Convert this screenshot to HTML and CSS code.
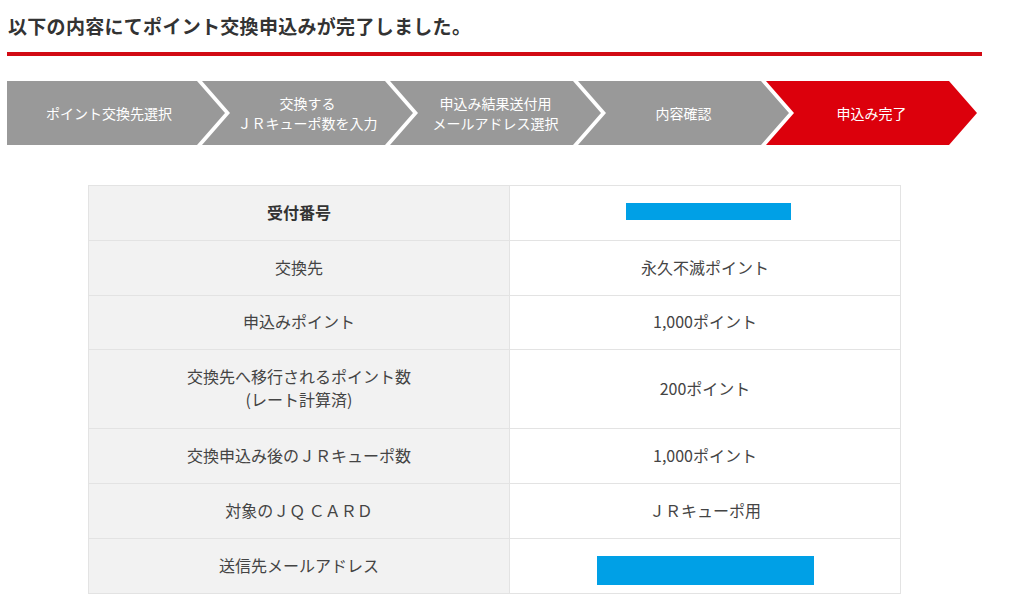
FILE: index.html
```html
<!DOCTYPE html>
<html lang="ja">
<head>
<meta charset="utf-8">
<title>ポイント交換申込み完了</title>
<link rel="stylesheet" href="styles.css">
</head>
<body>
<div class="page">
  <h1 class="title">以下の内容にてポイント交換申込みが完了しました。</h1>

  <ol class="steps">
    <li class="step step-first"><span class="step-text">ポイント交換先選択</span></li>
    <li class="step"><span class="step-text">交換する<br>ＪＲキューポ数を入力</span></li>
    <li class="step"><span class="step-text">申込み結果送付用<br>メールアドレス選択</span></li>
    <li class="step"><span class="step-text">内容確認</span></li>
    <li class="step step-current"><span class="step-text">申込み完了</span></li>
  </ol>

  <div class="summary">
    <div class="cell label strong">受付番号</div>
    <div class="cell value"><span class="mask mask-number"></span></div>

    <div class="cell label">交換先</div>
    <div class="cell value">永久不滅ポイント</div>

    <div class="cell label short">申込みポイント</div>
    <div class="cell value short">1,000ポイント</div>

    <div class="cell label tall">交換先へ移行されるポイント数<br>(レート計算済)</div>
    <div class="cell value tall">200ポイント</div>

    <div class="cell label">交換申込み後のＪＲキューポ数</div>
    <div class="cell value">1,000ポイント</div>

    <div class="cell label">対象のＪＱ ＣＡＲＤ</div>
    <div class="cell value">ＪＲキューポ用</div>

    <div class="cell label">送信先メールアドレス</div>
    <div class="cell value"><span class="mask mask-mail"></span></div>
  </div>
</div>
</body>
</html>
```

FILE: styles.css
```css
* {
  box-sizing: border-box;
}

html, body {
  margin: 0;
  padding: 0;
  background: #ffffff;
}

body {
  font-family: "Noto Sans CJK JP", "Noto Sans", "Liberation Sans", sans-serif;
  color: #444444;
}

.page {
  width: 975px;
  margin-left: 7px;
}

.title {
  margin: 0;
  padding: 12px 1px 12px;
  font-size: 19px;
  line-height: 28px;
  font-weight: bold;
  color: #333333;
  letter-spacing: 0.3px;
  border-bottom: 4px solid #d20a14;
}

.steps {
  list-style: none;
  margin: 25px 0 0;
  padding: 0;
  display: flex;
  height: 64px;
}

.step {
  width: 211px;
  height: 64px;
  margin-left: -23px;
  padding: 0 28px;
  display: flex;
  align-items: center;
  justify-content: center;
  text-align: center;
  background: #999999;
  color: #ffffff;
  font-size: 14px;
  line-height: 20px;
  clip-path: polygon(0 0, calc(100% - 28px) 0, 100% 50%, calc(100% - 28px) 100%, 0 100%, 28px 50%);
}

.step-text {
  display: block;
  white-space: nowrap;
}

.step-first {
  width: 218px;
  margin-left: 0;
  padding: 0 28px 0 14px;
  clip-path: polygon(0 0, calc(100% - 28px) 0, 100% 50%, calc(100% - 28px) 100%, 0 100%);
}

.step-current {
  background: #dc000c;
}

.summary {
  margin: 40px auto 0;
  width: 813px;
  display: grid;
  grid-template-columns: 420px 390px;
  gap: 1px;
  padding: 1px;
  background: #e3e3e3;
}

.cell {
  height: 54px;
  padding-bottom: 2px;
  display: flex;
  align-items: center;
  justify-content: center;
  text-align: center;
  font-size: 16px;
  line-height: 23px;
  color: #444444;
}

.cell.short {
  height: 53px;
}

.cell.tall {
  height: 78px;
}

.label {
  background: #f2f2f2;
}

.label.strong {
  font-weight: bold;
  color: #333333;
}

.value {
  background: #ffffff;
}

.mask {
  display: block;
  background: #00a0e6;
}

.mask-number {
  width: 165px;
  height: 17px;
  margin-left: 6px;
  margin-bottom: 2px;
}

.mask-mail {
  width: 217px;
  height: 29px;
  margin-top: 10px;
}
```
